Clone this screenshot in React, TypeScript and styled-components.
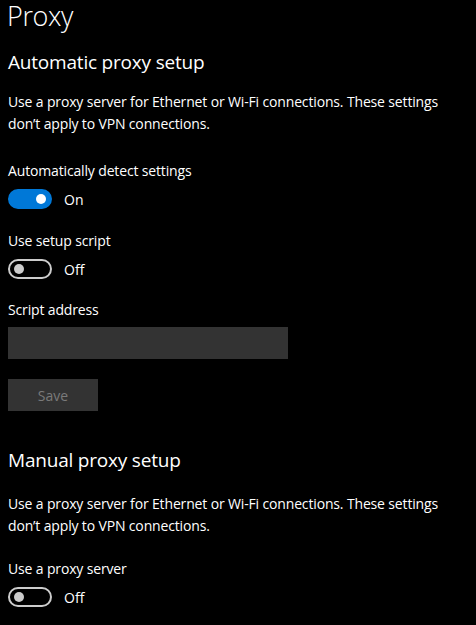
import React from "react";
import styled, { createGlobalStyle } from "styled-components";

const Global = createGlobalStyle`
  html, body { margin: 0; padding: 0; background: #000; }
  body { font-family: "Open Sans", "Noto Sans", sans-serif; color: #fff; }
`;

const Page = styled.div`
  width: 476px;
  height: 625px;
  overflow: hidden;
  padding: 2px 8px 0 8px;
  box-sizing: border-box;
  background: #000;
  display: flex;
  flex-direction: column;
`;

const Title = styled.h1`
  margin: 0 0 0 -1px;
  font-weight: 300;
  font-size: 27px;
  line-height: 28px;
  letter-spacing: -0.4px;
`;

const SectionTitle = styled.h2<{ $top: number }>`
  margin: ${(p) => p.$top}px 0 0 0;
  font-weight: 400;
  font-size: 19px;
  line-height: 26px;
  letter-spacing: -0.2px;
`;

const Para = styled.p<{ $top: number }>`
  margin: ${(p) => p.$top}px 0 0 0;
  font-size: 14px;
  line-height: 22px;
  letter-spacing: -0.15px;
`;

const Label = styled.div<{ $top: number }>`
  margin-top: ${(p) => p.$top}px;
  font-size: 14px;
  line-height: 20px;
  letter-spacing: -0.15px;
`;

const ToggleRow = styled.div`
  display: flex;
  align-items: center;
  gap: 12px;
  margin-top: 8px;
  height: 20px;
  font-size: 14px;
`;

const Track = styled.div<{ $on: boolean }>`
  width: 44px;
  height: 20px;
  border-radius: 10px;
  box-sizing: border-box;
  background: ${(p) => (p.$on ? "#0078d7" : "transparent")};
  border: 2px solid ${(p) => (p.$on ? "#0078d7" : "#cccccc")};
  display: flex;
  align-items: center;
  justify-content: ${(p) => (p.$on ? "flex-end" : "flex-start")};
  padding: 0 4px;
`;

const Knob = styled.div<{ $on: boolean }>`
  width: 10px;
  height: 10px;
  border-radius: 50%;
  background: ${(p) => (p.$on ? "#fff" : "#cccccc")};
`;

const Input = styled.div`
  width: 280px;
  height: 32px;
  background: #333;
  margin-top: 7px;
`;

const Button = styled.div`
  width: 90px;
  height: 32px;
  background: #333;
  color: #7a7a7a;
  margin-top: 20px;
  display: flex;
  align-items: center;
  justify-content: center;
  font-size: 14px;
`;

const Toggle = ({ on }: { on: boolean }) => (
  <ToggleRow>
    <Track $on={on}>
      <Knob $on={on} />
    </Track>
    <span>{on ? "On" : "Off"}</span>
  </ToggleRow>
);

const desc =
  "Use a proxy server for Ethernet or Wi-Fi connections. These settings don\u2019t apply to VPN connections.";

export default function App() {
  return (
    <>
      <Global />
      <Page>
        <Title>Proxy</Title>
        <SectionTitle $top={19}>Automatic proxy setup</SectionTitle>
        <Para $top={16}>{desc}</Para>
        <Label $top={26}>Automatically detect settings</Label>
        <Toggle on={true} />
        <Label $top={22}>Use setup script</Label>
        <Toggle on={false} />
        <Label $top={21}>Script address</Label>
        <Input />
        <Button>Save</Button>
        <SectionTitle $top={36}>Manual proxy setup</SectionTitle>
        <Para $top={20}>{desc}</Para>
        <Label $top={22}>Use a proxy server</Label>
        <Toggle on={false} />
      </Page>
    </>
  );
}
